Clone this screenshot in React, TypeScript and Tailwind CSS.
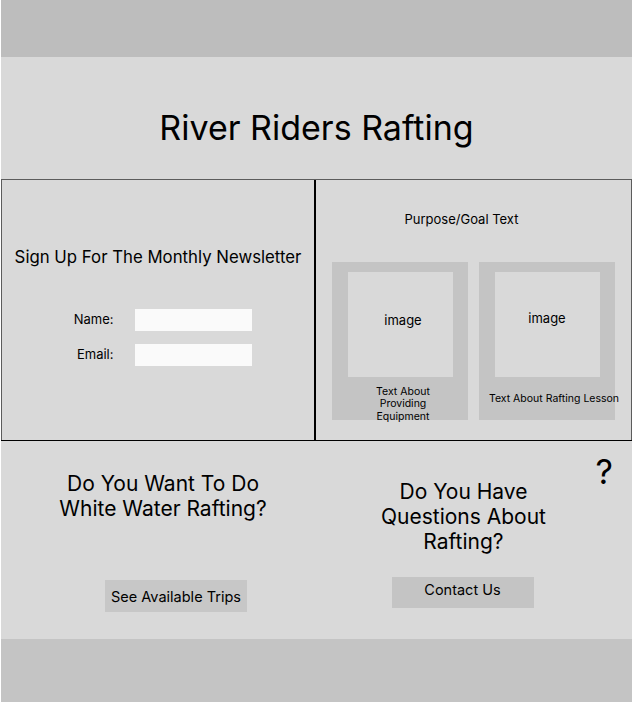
export default function App() {
  return (
    <div className="min-h-[702px] w-[634px] bg-white font-['Inter',_'Noto_Sans',_sans-serif] text-black">
      <div className="ml-px w-[631px] bg-[#d9d9d9]">
        {/* Top bar */}
        <div className="h-[57px] bg-[#bdbdbd]" />

        {/* Title */}
        <div className="flex h-[122px] items-center justify-center pt-[20px]">
          <h1 className="text-[34px] leading-none">River Riders Rafting</h1>
        </div>

        {/* Newsletter + purpose */}
        <div className="flex h-[261px] border-t border-l border-r border-[#5c5c5c] border-b-black">
          <div className="flex w-[314px] flex-col items-center border-r-2 border-black pt-[69px]">
            <h2 className="text-[16.8px] leading-none">Sign Up For The Monthly Newsletter</h2>
            <div className="mt-[43px] mr-[10px] flex flex-col gap-[13px]">
              <label className="flex items-center">
                <span className="w-[60px] pr-[1px] text-right text-[13px]">Name:</span>
                <input className="ml-[20px] h-[22px] w-[117px] bg-[#fafafa] outline-none" />
              </label>
              <label className="flex items-center">
                <span className="w-[60px] pr-[1px] text-right text-[13px]">Email:</span>
                <input className="ml-[20px] h-[22px] w-[117px] bg-[#fafafa] outline-none" />
              </label>
            </div>
          </div>

          <div className="flex flex-1 flex-col items-center pt-[30px]">
            <p className="pr-[24px] text-[13px]">Purpose/Goal Text</p>
            <div className="mt-[32px] flex gap-[11px]">
              <div className="flex h-[158px] w-[136px] flex-col items-center bg-[#c4c4c4] pt-[10px]">
                <div className="flex h-[105px] w-[105px] shrink-0 items-center justify-center bg-[#d9d9d9] pb-[6px] pl-[6px] text-[13px]">
                  image
                </div>
                <p className="mt-[9px] pl-[6px] text-center text-[10.5px] leading-[12.5px]">
                  Text About
                  <br />
                  Providing
                  <br />
                  Equipment
                </p>
              </div>
              <div className="flex h-[158px] w-[136px] flex-col items-center bg-[#c4c4c4] pt-[10px]">
                <div className="flex h-[105px] w-[105px] shrink-0 items-center justify-center bg-[#d9d9d9] pb-[11px] text-[13px]">
                  image
                </div>
                <p className="mt-[17px] whitespace-nowrap pl-[14px] text-center text-[10.5px] leading-none">
                  Text About Rafting Lesson
                </p>
              </div>
            </div>
          </div>
        </div>
        <div className="h-px bg-black" />

        {/* Calls to action */}
        <div className="relative flex h-[198px]">
          <div className="flex w-[324px] flex-col items-center pt-[30px]">
            <h3 className="text-center text-[21px] leading-[25px]">
              Do You Want To Do
              <br />
              White Water Rafting?
            </h3>
            <button className="mt-[59px] ml-[26px] h-[32px] w-[142px] bg-[#c7c7c7] pt-[1px] text-[14.5px]">
              See Available Trips
            </button>
          </div>
          <div className="flex flex-1 flex-col items-center pt-[38px]">
            <h3 className="pr-[30px] text-center text-[21px] leading-[25px]">
              Do You Have
              <br />
              Questions About
              <br />
              Rafting?
            </h3>
            <button className="mt-[23px] mr-[32px] h-[31px] w-[142px] bg-[#c4c4c4] pb-[5px] text-[14.5px]">
              Contact Us
            </button>
          </div>
          <span className="absolute top-[14px] right-[19px] text-[34px] leading-none">?</span>
        </div>

        {/* Footer */}
        <div className="h-[63px] bg-[#c4c4c4]" />
      </div>
    </div>
  );
}
